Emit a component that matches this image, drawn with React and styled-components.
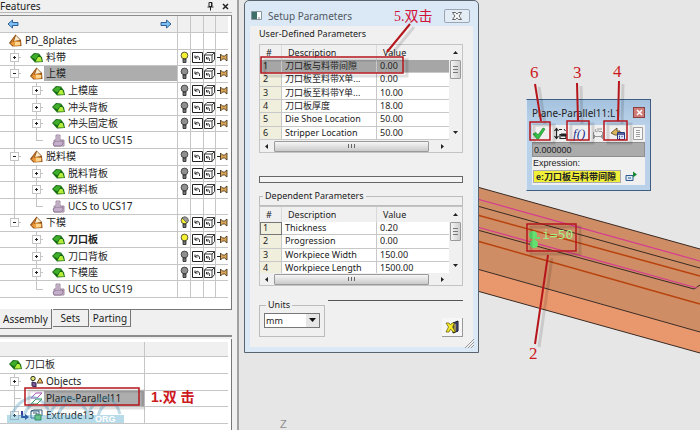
import React from 'react'
import styled, { createGlobalStyle, css } from 'styled-components'

const ui = '"Noto Sans", "Noto Sans CJK SC", sans-serif'

const GlobalStyle = createGlobalStyle`
  * {
    box-sizing: border-box;
  }

  body {
    margin: 0;
    background: #e6e6e6;
    color: #222;
    font-family: ${ui};
    font-size: 10px;
    line-height: 12px;
  }

  button, input, select {
    font: inherit;
    color: inherit;
    margin: 0;
    padding: 0;
  }

  svg {
    display: block;
    flex: none;
  }
`

/* ---------- icons ---------- */

const AssemblyIcon = () => (
  <svg width='13' height='13' viewBox='0 0 13 13'>
    <path d='M0 9L6.500.5 12 6l.5 6-9 .5z' fill='#8a4a12' />
    <path d='M7 1.500l4 4.500-6 1z' fill='#fbeccb' />
    <path d='M1 9l5-2 5.500.5v4l-7 .5z' fill='#eb9c3c' />
    <path d='M6 8l5 0v3l-5 .5z' fill='#ffd590' />
    <path d='M2 8l4-6-2 6z' fill='#d4822c' />
  </svg>
)

const PartIcon = () => (
  <svg width='13' height='13' viewBox='0 0 13 13'>
    <path d='M0 6l4-4 5 .5 3 4 1 4.500-8 .5z' fill='#176b14' />
    <path d='M1 6l3.500-3 4.500.5-3.500 5z' fill='#3fae2a' />
    <path d='M5.500 10.500l2.500-4.500h2.500l1.500 4.500z' fill='#b6ee3c' />
  </svg>
)

const UcsIcon = () => (
  <svg width='13' height='13' viewBox='0 0 13 13'>
    <path d='M4 1h4v5h4v6H2V6h2z' fill='#e4d6e6' stroke='#88708c' strokeWidth='.8' />
    <path d='M1 9l3-2h7v3l-2 2H2zM5 3h2M5 5h2' fill='#c3aecb' stroke='#79607e' strokeWidth='.7' />
  </svg>
)

const ObjectsIcon = () => (
  <svg width='13' height='13' viewBox='0 0 13 13'>
    <circle cx='3' cy='3.5' r='2.2' fill='#dbe66a' stroke='#333' />
    <path d='M7 8l3-5 3 5z' fill='#f0c060' stroke='#4a3010' strokeWidth='.9' />
    <path d='M2 7l4 1v4l-4-1z' fill='#7a5a9a' stroke='#332244' />
  </svg>
)

const PlaneIcon = () => (
  <svg width='13' height='13' viewBox='0 0 13 13' fill='#fff' fillOpacity='.6'>
    <path d='M1 6l5-5h6L7 6z' stroke='#b054b8' />
    <path d='M1 12l5-5h6l-5 5z' stroke='#3a9a50' />
  </svg>
)

const ExtrudeIcon = () => (
  <svg width='22' height='13' viewBox='0 0 22 13' fill='none'>
    <path d='M1 2v6h5' stroke='#1c2c90' strokeWidth='1.8' />
    <path d='M4 5l4 3-4 3z' fill='#1c2c90' />
    <path d='M10 2h8v7h-8zM10 2l3-1h8v6M12 4h4v5' stroke='#2f5a78' />
    <path d='M14 6h6v5h-6z' fill='#7cd860' stroke='#1f7a2a' />
  </svg>
)

const BulbIcon = ({ state = 'off' }) => (
  <svg width='9' height='13' viewBox='0 0 9 13'>
    <circle cx='4.5' cy='4.5' r='3.4' fill={state === 'off' ? '#8f8f8f' : '#f6f032'} stroke='#333' strokeWidth='.8' />
    {state === 'half' && <path d='M2 2l5 5a3.4 3.4 0 0 0-3-6z' fill='#999' stroke='#333' strokeWidth='.5' />}
    <path d='M3 8h3v3.5H3z' fill='#777' stroke='#222' strokeWidth='.8' />
  </svg>
)

const UndoIcon = () => (
  <svg width='11' height='11' viewBox='0 0 11 11' fill='none' stroke='#222'>
    <path d='M.5.5h10v10H.5z' />
    <path d='M3 6V3.500M3 6h2.500M3.200 5.800C5 3 8 4.500 7.500 8' />
  </svg>
)

const CubeIcon = () => (
  <svg width='11' height='11' viewBox='0 0 11 11' fill='none' stroke='#222' strokeWidth='.9'>
    <path d='M.5 3h7.500v7.500H.5zM.5 3L3 .5h7.500L8 3M10.500.5v7L8 10.500' />
    <path d='M2.500 7V5M2.500 7h2M2.700 6.600C4 4.500 6 6 5.500 9' />
  </svg>
)

const PinIcon = () => (
  <svg width='11' height='9' viewBox='0 0 11 9'>
    <path d='M0 4.500h4' stroke='#222' />
    <path d='M3.500 1v7l2-2h2l2.500 2V1L7.500 3h-2z' fill='#dba657' stroke='#3a2a12' strokeWidth='.8' />
  </svg>
)

const ArrowIcon = ({ flip }) => (
  <svg width='12' height='10' viewBox='0 0 12 10'>
    <path
      d='M1 5l4.500-4v2.500H11v3H5.500V9z'
      fill='#7cc0f4'
      stroke='#23508e'
      strokeWidth='.9'
      transform={flip ? 'rotate(180 6 5)' : undefined}
    />
  </svg>
)

const TackIcon = () => (
  <svg width='7' height='9' viewBox='0 0 7 9' fill='none' stroke='#222'>
    <path d='M2 .5h3v4H2zM.5 5h6M3.500 5v3.500M4.500 1v4' />
  </svg>
)

const CrossIcon = ({ color = '#222' }) => (
  <svg width='7' height='7' viewBox='0 0 7 7'>
    <path d='M1 1l5 5M6 1L1 6' stroke={color} strokeWidth='1.500' />
  </svg>
)

const OutlineCrossIcon = () => (
  <svg width='10' height='8' viewBox='0 0 10 8'>
    <path d='M.5.5h3L5 2.200 6.500.5h3L7 4l2.500 3.500h-3L5 5.800 3.500 7.500h-3L3 4z' fill='#fff' stroke='#555' strokeWidth='.9' />
  </svg>
)

const WindowIcon = () => (
  <svg width='11' height='9' viewBox='0 0 11 9'>
    <path d='M.5.500h10v8H.5z' fill='#fff' stroke='#8894a0' />
    <path d='M1 1h5v7H1z' fill='#3f6f6a' />
    <path d='M7 7h2' stroke='#888' />
  </svg>
)

const CheckIcon = () => (
  <svg width='14' height='13' viewBox='0 0 14 13'>
    <path d='M1 7l3-1.500L6 8l5-7 2 1-6.500 10H5z' fill='#35c045' stroke='#1c8a30' strokeWidth='.7' />
  </svg>
)

const SwapIcon = () => (
  <svg width='14' height='13' viewBox='0 0 14 13' fill='none' stroke='#222'>
    <path d='M3.500 2v9M1.500 4l2-2.500 2 2.500M1.500 9l2 2.500 2-2.500M6 2.500h3M7 7.500h6v4H7z' strokeWidth='1.200' />
    <path d='M8 7h5v2H8zM11 2l1.500 2' fill='#222' />
  </svg>
)

const DimensionIcon = () => (
  <svg width='12' height='13' viewBox='0 0 12 13' fill='none' stroke='#999'>
    <path d='M1.500 5v7M10.500 5v7M1 9.500h10M4 2l-1 2 2 1M6 1v4M7 2h3M7 4.500h3' />
    <path d='M3 8L1.500 9.500 3 11M9 8l1.500 1.500L9 11' />
  </svg>
)

const MeasureIcon = () => (
  <svg width='16' height='13' viewBox='0 0 16 13'>
    <path d='M1 6l6-5v3h3v4H5z' fill='#dcb65a' stroke='#5a431a' strokeWidth='.8' />
    <path d='M7.500 5.500h7v7h-7z' fill='#e2e9ff' stroke='#28387c' />
    <path d='M8 7h6M9 9.500h1M11.500 9.500h1M9 11.500h1' stroke='#28387c' strokeWidth='1.500' />
  </svg>
)

const ListIcon = () => (
  <svg width='10' height='13' viewBox='0 0 10 13' fill='#f8f8f8' stroke='#a0a0a0'>
    <path d='M.5.5h9v12h-9zM3 3.500h4M3 5.500h4M3 7.500h4M3 9.500h4' />
  </svg>
)

const PickIcon = () => (
  <svg width='12' height='11' viewBox='0 0 12 11'>
    <path d='M1 4.500h7v5H1z' fill='#dfe9f5' stroke='#2f5c8e' />
    <path d='M3 7h3' stroke='#2f5c8e' />
    <path d='M8 .5l4 3-4 3z' fill='#178a34' />
  </svg>
)

const ExitIcon = () => (
  <svg width='15' height='14' viewBox='0 0 15 14'>
    <path d='M8 3l5-2v10l-5 2z' fill='#9a8d5c' stroke='#111' />
    <path d='M8 3h4v9' fill='none' stroke='#222b70' strokeWidth='1.500' />
    <path d='M1 3h3l1.500 2L7 3h2.500L7.500 7l3 5H8L5.500 9 4 12H1l2.500-5z' fill='#f7ec2c' stroke='#5d5200' strokeWidth='.7' />
  </svg>
)

/* ---------- sidebar ---------- */

const Page = styled.div`
  display: flex;
  min-height: 100vh;
  overflow: hidden;
`

const Sidebar = styled.aside`
  display: flex;
  flex-direction: column;
  flex: none;
  width: 239px;
  padding-right: 5px;
  background: #f0f0f0;
  border-right: 2px solid #a2a2a2;
`

const SidebarTitle = styled.header`
  display: flex;
  align-items: center;
  gap: 8px;
  height: 13px;
  padding-right: 3px;
  border-bottom: 1px solid #b8b8b8;

  h2 {
    flex: 1;
    margin: 0;
    font-size: 10px;
    font-weight: 400;
    line-height: 12px;
  }
`

const IconButton = styled.button`
  display: grid;
  place-items: center;
  border: 0;
  background: none;
`

const Panel = styled.section`
  background: #fff;
  border-top: ${p => (p.$grow ? 0 : 1)}px solid #8c8c8c;
  border-right: 1px solid #777;
  padding: ${p => (p.$grow ? '3px 3px 0 0' : '0 3px 11px 0')};
  flex: ${p => (p.$grow ? 1 : 'none')};
  margin-top: 2px;
`

const TreeTable = styled.table`
  width: 100%;
  height: ${p => p.$height}px;
  table-layout: fixed;
  border-collapse: separate;
  border-spacing: 0;

  th, td {
    padding: 0;
    border-bottom: 1px solid #c6c6c6;
    border-left: 1px solid #c6c6c6;
  }

  th {
    height: ${p => p.$head}px;
    background: #f0f0f0;
  }

  th:first-child, td:first-child {
    border-left: 0;
  }

  td svg {
    margin: 0 auto;
  }
`

const Arrows = styled.div`
  display: flex;
  justify-content: space-between;
  padding: 0 5px 0 7px;
`

const vertical = (x, height) =>
  `linear-gradient(#c4c4c4, #c4c4c4) ${x}px 0 / 1px ${height} no-repeat`

const guides = ({ $level, $last, $guide }) => {
  const lines = []
  if ($level === 2) {
    lines.push(vertical(36, $last ? '50%' : '100%'))
    lines.push('linear-gradient(#c4c4c4, #c4c4c4) 36px 50% / 7px 1px no-repeat')
  }
  if ($level === 1) {
    lines.push('linear-gradient(#c4c4c4, #c4c4c4) 14px 50% / 7px 1px no-repeat')
  }
  if ($guide) lines.push(vertical(14, $level === 1 && $last ? '50%' : '100%'))
  return lines.length ? lines.join(', ') : 'none'
}

const NameCell = styled.td`
  background: ${guides};
`

const Name = styled.div`
  display: flex;
  align-items: center;
  height: 15px;
  padding-left: ${p => (p.$level ? p.$level * 22 - 12 : 9)}px;
`

const Expander = styled.button`
  width: 9px;
  height: 9px;
  margin-right: ${p => (p.$tight ? 2 : 11)}px;
  border: 1px solid #c4c4c4;
  background:
    linear-gradient(#222, #222) center / 3px 1px no-repeat,
    linear-gradient(#222, #222) center / 1px ${p => (p.$open ? 1 : 3)}px no-repeat,
    #fff;
`

const Spacer = styled.span`
  width: 20px;
`

const Label = styled.span`
  flex: 1;
  padding-left: 3px;
  line-height: 15px;
  white-space: nowrap;
  font-weight: ${p => (p.$bold ? 700 : 400)};
  ${p => p.$selected && css`
    margin-left: 1px;
    padding-left: 2px;
    background: #adadad;
  `}
`

const Tabs = styled.div`
  display: flex;
  align-items: flex-start;
  gap: 1px;
  height: 28px;
  border-bottom: 2px solid #8c8c8c;
`

const Tab = styled.button`
  height: ${p => (p.$active ? 20 : 18)}px;
  padding: 0 3px;
  min-width: 36px;
  background: #f0f0f0;
  border: 1px solid #777;
  border-width: ${p => (p.$active ? '0 1px 1px 0' : '1px 1px 1px 0')};
`

const TabLine = styled.span`
  flex: 1;
  margin-left: -1px;
  border-top: 1px solid #777;
`

const features = [
  { level: 0, icon: AssemblyIcon, name: 'PD_8plates' },
  { level: 1, icon: PartIcon, name: '料带', guide: true, bulb: 'on' },
  { level: 1, icon: AssemblyIcon, name: '上模', open: true, guide: true, bulb: 'off', selected: true },
  { level: 2, icon: PartIcon, name: '上模座', guide: true, bulb: 'off' },
  { level: 2, icon: PartIcon, name: '冲头背板', guide: true, bulb: 'off' },
  { level: 2, icon: PartIcon, name: '冲头固定板', guide: true, bulb: 'off' },
  { level: 2, icon: UcsIcon, name: 'UCS to UCS15', guide: true, last: true, leaf: true },
  { level: 1, icon: AssemblyIcon, name: '脱料模', open: true, guide: true, bulb: 'off' },
  { level: 2, icon: PartIcon, name: '脱料背板', guide: true, bulb: 'off' },
  { level: 2, icon: PartIcon, name: '脱料板', guide: true, bulb: 'off' },
  { level: 2, icon: UcsIcon, name: 'UCS to UCS17', guide: true, last: true, leaf: true },
  { level: 1, icon: AssemblyIcon, name: '下模', open: true, guide: true, last: true, bulb: 'half' },
  { level: 2, icon: PartIcon, name: '刀口板', bulb: 'on', bold: true },
  { level: 2, icon: PartIcon, name: '刀口背板', bulb: 'off' },
  { level: 2, icon: PartIcon, name: '下模座', bulb: 'off' },
  { level: 2, icon: UcsIcon, name: 'UCS to UCS19', last: true, leaf: true },
]

const parts = [
  { level: 0, icon: PartIcon, name: '刀口板' },
  { level: 1, icon: ObjectsIcon, name: 'Objects', guide: true },
  { level: 1, icon: PlaneIcon, name: 'Plane-Parallel11', guide: true, leaf: true, selected: true },
  { level: 1, icon: ExtrudeIcon, name: 'Extrude13', guide: true, last: true, tight: true },
]

const TreeName = ({ item }) => {
  const Icon = item.icon
  return (
    <NameCell $level={item.level} $guide={item.guide} $last={item.last}>
      <Name $level={item.level}>
        {item.level > 0 && (item.leaf
          ? <Spacer />
          : <Expander $open={item.open} $tight={item.tight} aria-label={`Toggle ${item.name}`} />)}
        <span><Icon /></span>
        <Label $bold={item.bold} $selected={item.selected}>{item.name}</Label>
      </Name>
    </NameCell>
  )
}

const FeatureTree = () => (
  <TreeTable $height={282} $head={17}>
    <colgroup>
      <col />
      <col width='13' />
      <col width='13' />
      <col width='12' />
      <col width='13' />
    </colgroup>
    <thead>
      <tr>
        <th>
          <Arrows>
            <IconButton aria-label='Back'><ArrowIcon /></IconButton>
            <IconButton aria-label='Forward'><ArrowIcon flip /></IconButton>
          </Arrows>
        </th>
        <th /><th /><th /><th />
      </tr>
    </thead>
    <tbody>
      {features.map(item => (
        <tr key={item.name}>
          <TreeName item={item} />
          <td>{item.bulb && <BulbIcon state={item.bulb} />}</td>
          <td>{item.bulb && <UndoIcon />}</td>
          <td>{item.bulb && <CubeIcon />}</td>
          <td>{item.bulb && <PinIcon />}</td>
        </tr>
      ))}
    </tbody>
  </TreeTable>
)

const PartTree = () => (
  <TreeTable $height={82} $head={15}>
    <colgroup>
      <col width='144' />
      <col />
    </colgroup>
    <thead>
      <tr><th /><th /></tr>
    </thead>
    <tbody>
      {parts.map(item => (
        <tr key={item.name}>
          <TreeName item={item} />
          <td />
        </tr>
      ))}
    </tbody>
  </TreeTable>
)

/* ---------- setup dialog ---------- */

const Viewport = styled.main`
  position: relative;
  flex: 1;
  background: #e6e6e6;
`

const Model = styled.svg`
  position: absolute;
  inset: 0;
  width: 100%;
  height: 100%;
`

const Dialog = styled.section`
  position: absolute;
  left: 5px;
  top: 0;
  width: 235px;
  padding: 0 5px 5px;
  border: 1px solid #58636e;
  border-radius: 5px 5px 0 0;
  background: #dbe8f5;
  font-size: 9px;
`

const DialogTitle = styled.header`
  display: flex;
  align-items: center;
  gap: 6px;
  height: 25px;
  padding: 4px 3px 0 1px;

  h1 {
    flex: 1;
    margin: 0;
    color: #505a64;
    font-size: 10px;
    font-weight: 400;
  }
`

const CloseButton = styled(IconButton)`
  width: 26px;
  height: 14px;
  border: 1px solid #9aa6b4;
  border-radius: 2px;
  background: #e4edf6;
`

const DialogBody = styled.div`
  display: flex;
  flex-direction: column;
  padding: 1px 10px 10px 9px;
  background: #f0f0f0;
`

const Caption = styled.h2`
  margin: 0 0 3px;
  font-size: 9px;
  font-weight: 400;
  line-height: 14px;
`

const GridBox = styled.div`
  display: grid;
  grid-template-columns: 1fr 13px;
  grid-template-rows: ${p => p.$rows}px 12px;
  border: 1px solid #c4c4c4;
  background: #f0f0f0;
`

const Clip = styled.div`
  overflow: hidden;
`

const ParamTable = styled.table`
  width: 100%;
  height: ${p => p.$height}px;
  table-layout: fixed;
  border-collapse: separate;
  border-spacing: 0;

  th, td {
    padding: 0 0 0 3px;
    text-align: left;
    font-weight: 400;
    white-space: nowrap;
  }

  th {
    height: 15px;
    padding-left: 6px;
    border-right: 1px solid #dadada;
  }

  td {
    line-height: 12px;
    border-right: 1px solid #c8c8c8;
    border-bottom: 1px solid #c8c8c8;
    background: #fff;
  }

  th:last-child, td:last-child {
    border-right: 0;
  }

  td:first-child {
    background: #f0eedc;
  }
`

const ParamRow = styled.tr`
  && td {
    ${p => p.$selected && 'background: #a6a6a6;'}
  }

  && td:first-child {
    ${p => p.$focused && 'outline: 1px solid #777; outline-offset: -1px;'}
  }
`

const VScroll = styled.div`
  display: flex;
  flex-direction: column;
  align-items: center;
  justify-content: space-between;
  padding: 5px 1px;
`

const VThumb = styled.span`
  width: 11px;
  height: 19px;
  margin: 5px 0 auto;
  border: 1px solid #9a9a9a;
  border-radius: 1px;
  background:
    repeating-linear-gradient(#777 0 1px, transparent 1px 3px) center / 5px 7px no-repeat,
    linear-gradient(90deg, #f4f4f4, #cfcfcf);
`

const HScroll = styled.div`
  display: flex;
  align-items: center;
  grid-column: 1 / 3;
  padding: 0 17px 0 4px;
`

const HThumb = styled.span`
  width: 155px;
  height: 11px;
  margin: 0 auto 0 5px;
  border: 1px solid #9a9a9a;
  border-radius: 1px;
  background:
    repeating-linear-gradient(90deg, #666 0 1px, transparent 1px 3px) center / 7px 4px no-repeat,
    linear-gradient(#f6f6f6, #cacaca);
`

const Caret = ({ d }) => (
  <svg width='5' height='5' viewBox='0 0 5 5'><path d={d} fill='#222' /></svg>
)

const Progress = styled.div`
  height: 7px;
  margin: 23px 0 6px;
  border: 1px solid #666;
  background: #f4f4f4;
`

const Group = styled.fieldset`
  min-width: 0;
  margin: 0;
  padding: ${p => (p.$narrow ? '1px 4px 8px' : '2px 0 0')};
  border: 1px solid #bcbcbc;

  legend {
    margin-left: ${p => (p.$narrow ? 2 : 3)}px;
    padding: 0 2px;
    line-height: 14px;
  }
`

const Footer = styled.footer`
  display: grid;
  grid-template-columns: 66px 1fr;
  column-gap: 3px;
  margin-top: 12px;
`

const FooterEnd = styled.div`
  display: flex;
  justify-content: flex-end;
  align-items: flex-end;
  margin-top: 2px;
  border-top: 1px solid #555;
`

const SelectWrap = styled.label`
  display: grid;
  align-items: center;

  & > * {
    grid-area: 1 / 1;
  }

  svg {
    justify-self: end;
    margin-right: 4px;
    pointer-events: none;
  }
`

const UnitSelect = styled.select`
  display: block;
  width: 100%;
  height: 15px;
  padding-left: 1px;
  border: 1px solid #777;
  border-radius: 0;
  appearance: none;
  background:
    linear-gradient(#fff, #fff) 0 0 / calc(100% - 13px) 100% no-repeat,
    #e6e6e6;
`

const ExitButton = styled(IconButton)`
  width: 21px;
  height: 19px;
  border-right: 1px solid #999;
  border-bottom: 1px solid #999;
  background: #f6f6f6;
`

const Grip = styled.svg`
  position: absolute;
  right: 4px;
  bottom: 4px;
`

const userParams = [
  ['刀口板与料带间隙', '0.00'],
  ['刀口板至料带X单...', '0.00'],
  ['刀口板至料带Y单...', '10.00'],
  ['刀口板厚度', '18.00'],
  ['Die Shoe Location', '50.00'],
  ['Stripper Location', '50.00'],
]

const dependentParams = [
  ['Thickness', '0.20'],
  ['Progression', '0.00'],
  ['Workpiece Width', '150.00'],
  ['Workpiece Length', '1500.00'],
]

const Params = ({ rows, height, tableHeight, selected, focused }) => (
  <GridBox $rows={height}>
    <Clip>
      <ParamTable $height={tableHeight}>
        <colgroup>
          <col width='22' />
          <col width='95' />
          <col />
        </colgroup>
        <thead>
          <tr><th>#</th><th>Description</th><th>Value</th></tr>
        </thead>
        <tbody>
          {rows.map(([name, value], i) => (
            <ParamRow key={name} $selected={i === selected} $focused={i === focused}>
              <td>{i + 1}</td>
              <td>{name}</td>
              <td>{value}</td>
            </ParamRow>
          ))}
        </tbody>
      </ParamTable>
    </Clip>
    <VScroll>
      <Caret d='M0 4l2.500-3L5 4z' />
      <VThumb />
      <Caret d='M0 1l2.500 3L5 1z' />
    </VScroll>
    <HScroll>
      <Caret d='M4 0L1 2.500 4 5z' />
      <HThumb />
      <Caret d='M1 0l3 2.500L1 5z' />
    </HScroll>
  </GridBox>
)

const SetupDialog = () => (
  <Dialog>
    <DialogTitle>
      <WindowIcon />
      <h1>Setup Parameters</h1>
      <CloseButton aria-label='Close'><OutlineCrossIcon /></CloseButton>
    </DialogTitle>
    <DialogBody>
      <Caption>User-Defined Parameters</Caption>
      <Params rows={userParams} height={95} tableHeight={95} selected={0} />
      <Progress />
      <Group>
        <legend>Dependent Parameters</legend>
      </Group>
      <Params rows={dependentParams} height={66} tableHeight={68} focused={0} />
      <Footer>
        <Group $narrow>
          <legend>Units</legend>
          <SelectWrap>
            <UnitSelect aria-label='Units' defaultValue='mm'>
              <option>mm</option>
              <option>inch</option>
            </UnitSelect>
            <svg width='7' height='5' viewBox='0 0 7 5'><path d='M0 0h7L3.500 4z' fill='#111' /></svg>
          </SelectWrap>
        </Group>
        <FooterEnd>
          <ExitButton aria-label='Exit'><ExitIcon /></ExitButton>
        </FooterEnd>
      </Footer>
    </DialogBody>
    <Grip width='9' height='9' viewBox='0 0 9 9'>
      <path d='M0 9l9-9M3 9l6-6M6 9l3-3' stroke='#999' />
    </Grip>
  </Dialog>
)

/* ---------- parameter palette ---------- */

const Palette = styled.section`
  position: absolute;
  left: 287px;
  top: 99px;
  width: 125px;
  padding: 0 5px 5px;
  border: 1px solid #3d5e80;
  border-left-color: #dce8f4;
  background: linear-gradient(#a4c2de, #b9d1e9 24px, #b9d1e9);
  font-family: "Liberation Sans", sans-serif;
  font-size: 9px;
`

const PaletteTitle = styled.header`
  display: flex;
  align-items: center;
  justify-content: space-between;
  height: 25px;

  h2 {
    margin: 0;
    font-family: ${ui};
    font-size: 10px;
    font-weight: 400;
    white-space: nowrap;
  }
`

const RedClose = styled(IconButton)`
  width: 12px;
  height: 11px;
  border: 1px solid #8a4040;
  background: #cf7c78;
`

const PaletteBody = styled.div`
  padding-bottom: 1px;
  background: #f0f0f0;
`

const Toolbar = styled.div`
  display: flex;
  align-items: center;
  justify-content: space-between;
  height: 17px;
  padding-right: 2px;
`

const FxButton = styled(IconButton)`
  color: #20308c;
  font: italic 13px/16px "Liberation Serif", serif;
`

const ValueInput = styled.input`
  display: block;
  width: 100%;
  height: 15px;
  padding-left: 1px;
  border: 1px solid #8e8e8e;
  background: #ababab;
`

const Field = styled.label`
  display: block;
  padding: 0 1px;
  line-height: 12px;
`

const ExpressionRow = styled.div`
  display: flex;
  align-items: center;
  gap: 4px;
  height: 15px;
  padding-left: 1px;
`

const ExpressionInput = styled.input`
  width: 88px;
  height: 13px;
  padding-left: 2px;
  border: 1px solid #aaa;
  background: #f0f03a;
  color: #222;
  font: 700 9px/12px "Liberation Sans", "Noto Sans CJK SC", sans-serif;
`

const ParameterPalette = () => (
  <Palette>
    <PaletteTitle>
      <h2>Plane-Parallel11:L1</h2>
      <RedClose aria-label='Close'><CrossIcon color='#fff' /></RedClose>
    </PaletteTitle>
    <PaletteBody>
      <Toolbar>
        <IconButton aria-label='Apply'><CheckIcon /></IconButton>
        <IconButton aria-label='Swap'><SwapIcon /></IconButton>
        <FxButton>f()</FxButton>
        <IconButton aria-label='Dimension'><DimensionIcon /></IconButton>
        <IconButton aria-label='Parameters'><MeasureIcon /></IconButton>
        <IconButton aria-label='List'><ListIcon /></IconButton>
      </Toolbar>
      <ValueInput aria-label='Value' readOnly value='0.000000' />
      <Field htmlFor='expression'>Expression:</Field>
      <ExpressionRow>
        <ExpressionInput id='expression' defaultValue='e:刀口板与料带间隙' />
        <IconButton aria-label='Pick'><PickIcon /></IconButton>
      </ExpressionRow>
    </PaletteBody>
  </Palette>
)

/* ---------- model and callouts ---------- */

const ModelView = () => (
  <Model viewBox='239 0 461 430' preserveAspectRatio='xMinYMin slice' fill='none'>
    <path d='M470 185L700 249V332L470 267z' fill='#cf8d66' />
    <path d='M470 267L700 332V353L470 289z' fill='#e9986e' />
    <g stroke='#3a2a22'>
      <path d='M470 185L700 249M470 204L700 268M470 228L694 289 700 285M470 267L700 332M470 289L700 353' />
    </g>
    <path d='M470 197L700 261M470 225L697 288' stroke='#d53a92' strokeWidth='1.200' />
    <path d='M470 213L700 276M470 239L700 304' stroke='#b8420c' strokeWidth='1.500' />
    <circle cx='533' cy='235' r='4' fill='#63e070' />
    <circle cx='534' cy='244' r='4' fill='#63e070' />
    <path d='M534 234v10M536 238h4' stroke='#63e070' strokeWidth='2' />
  </Model>
)

const Overlay = styled.svg`
  position: absolute;
  left: 0;
  top: 0;
  pointer-events: none;
`

const Note = styled.span`
  position: absolute;
  left: ${p => p.$x}px;
  top: ${p => p.$y}px;
  color: ${p => p.$color || '#cc1a1e'};
  font: ${p => p.$font || '17px/18px "Liberation Serif", "Noto Sans CJK SC", serif'};
  white-space: pre;
  pointer-events: none;
`

const boxes = [
  [261, 57, 142, 16],
  [25, 388, 114, 17],
  [530, 122, 20, 18],
  [567, 121, 22, 19],
  [604, 121, 23, 19],
  [527, 224, 49, 27],
]

const leaders = [
  'M410 24L387 52',
  'M535 84L541 121',
  'M577 83L578 121',
  'M619 81L618 121',
  'M548 255L535 344',
]

const Callouts = () => (
  <>
    <Overlay width='700' height='430' fill='none'>
      <g stroke='#000' strokeOpacity='.12' strokeWidth='3' transform='translate(4 3)'>
        {leaders.map(d => <path key={d} d={d} />)}
        {boxes.map(([x, y, w, h]) => <rect key={`${x}-${y}`} x={x} y={y} width={w} height={h} />)}
      </g>
      <g stroke='#b5161c' strokeWidth='2'>
        {leaders.map(d => <path key={d} d={d} />)}
      </g>
      <g stroke='#b5161c' strokeWidth='1.500'>
        {boxes.map(([x, y, w, h]) => <rect key={`${x}-${y}`} x={x} y={y} width={w} height={h} />)}
      </g>
    </Overlay>
    <Note $x={394} $y={8} $color='#d01238' $font='14px/18px "Liberation Serif", "Noto Sans CJK SC", serif'>5.双击</Note>
    <Note $x={151} $y={388} $font='700 14px/18px "Liberation Sans", "Noto Sans CJK SC", sans-serif'>1.双 击</Note>
    <Note $x={530} $y={64}>6</Note>
    <Note $x={573} $y={64}>3</Note>
    <Note $x={613} $y={63}>4</Note>
    <Note $x={529} $y={345}>2</Note>
    <Note $x={542} $y={226} $color='#a4f084' $font='13px/18px "DejaVu Sans Mono", monospace'>i=50</Note>
    <Note $x={280} $y={418} $color='#8c8c8c' $font='11px/13px "Liberation Sans", sans-serif'>Z</Note>
  </>
)

const Watermark = () => (
  <Overlay width='130' height='430'>
    <g opacity='.4'>
      <path
        d='M11 417q6-17 22-20 12 3 17 17 6-14 18-17 14 3 20 17 6-14 18-17 10 3 14 17M24 416q3-10 10-13M58 416q3-10 10-13M98 416q3-10 10-13'
        fill='none'
        stroke='#62a8c4'
        strokeWidth='3'
      />
      <path d='M7 415h117v8H7z' fill='#4fa8cc' />
    </g>
    <text x='95' y='422' fill='#fff' fontFamily='Liberation Sans' fontSize='9' fontWeight='700'>
      ORG
    </text>
  </Overlay>
)

const App = () => (
  <Page>
    <GlobalStyle />
    <Sidebar>
      <SidebarTitle>
        <h2>Features</h2>
        <IconButton aria-label='Pin'><TackIcon /></IconButton>
        <IconButton aria-label='Close'><CrossIcon /></IconButton>
      </SidebarTitle>
      <Panel>
        <FeatureTree />
      </Panel>
      <Tabs>
        <Tab $active>Assembly</Tab>
        <Tab>Sets</Tab>
        <Tab>Parting</Tab>
        <TabLine />
      </Tabs>
      <Panel $grow>
        <PartTree />
      </Panel>
    </Sidebar>
    <Viewport>
      <ModelView />
      <SetupDialog />
      <ParameterPalette />
    </Viewport>
    <Watermark />
    <Callouts />
  </Page>
)

export default App
